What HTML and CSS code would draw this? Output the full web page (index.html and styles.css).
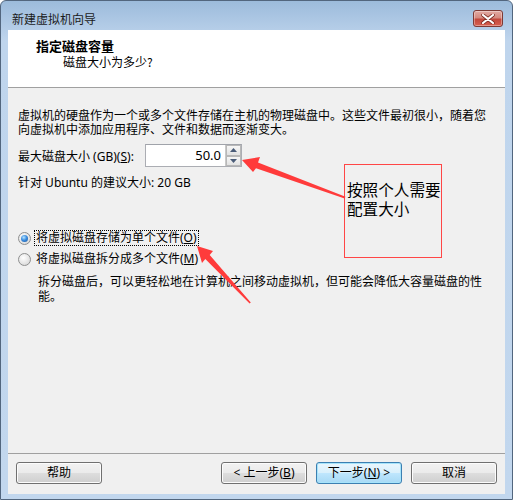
FILE: index.html
```html
<!DOCTYPE html>
<html lang="zh-CN">
<head>
<meta charset="utf-8">
<title>新建虚拟机向导</title>
<link rel="stylesheet" href="styles.css">
</head>
<body>
<div class="window">
  <div class="titlebar">
    <span class="title">新建虚拟机向导</span>
    <span class="close">
      <svg width="14" height="10" viewBox="0 0 14 10"><path d="M2 1 L12 9 M12 1 L2 9" stroke="#7a2a22" stroke-width="3.6" stroke-linecap="round"/><path d="M2 1 L12 9 M12 1 L2 9" stroke="#fff" stroke-width="2.2" stroke-linecap="round"/></svg>
    </span>
  </div>
  <div class="client">
    <div class="header">
      <div class="h-title">指定磁盘容量</div>
      <div class="h-sub">磁盘大小为多少?</div>
    </div>
    <div class="body">
      <p class="intro">虚拟机的硬盘作为一个或多个文件存储在主机的物理磁盘中。这些文件最初很小，随着您<br>向虚拟机中添加应用程序、文件和数据而逐渐变大。</p>
      <div class="size-row">
        <span class="size-label">最大磁盘大小 (GB)(<u>S</u>):</span>
        <div class="numbox">
          <span class="num">50.0</span>
          <span class="spin">
            <span class="spin-btn"><svg width="7" height="4" viewBox="0 0 7 4"><path d="M0 4 L3.5 0 L7 4Z" fill="#4a5c78"/></svg></span>
            <span class="spin-btn"><svg width="7" height="4" viewBox="0 0 7 4"><path d="M0 0 L3.5 4 L7 0Z" fill="#4a5c78"/></svg></span>
          </span>
        </div>
      </div>
      <p class="suggest">针对 Ubuntu 的建议大小: 20 GB</p>
      <div class="radio-row first">
        <span class="radio checked"></span>
        <span class="r-label focus">将虚拟磁盘存储为单个文件(<u>O</u>)</span>
      </div>
      <div class="radio-row second">
        <span class="radio"></span>
        <span class="r-label">将虚拟磁盘拆分成多个文件(<u>M</u>)</span>
      </div>
      <p class="desc">拆分磁盘后，可以更轻松地在计算机之间移动虚拟机，但可能会降低大容量磁盘的性<br>能。</p>
    </div>
    <div class="footer">
      <button class="btn">帮助</button>
      <span class="spacer"></span>
      <button class="btn">&lt; 上一步(<u>B</u>)</button>
      <button class="btn default">下一步(<u>N</u>) &gt;</button>
      <button class="btn">取消</button>
    </div>
  </div>
  <div class="note">按照个人需要<br>配置大小</div>
  <svg class="arrows" width="513" height="500" viewBox="0 0 513 500">
    <polygon points="242,160 260,157 258,162.6 345.5,196.8 344.6,198.4 256,168.2 253,172" fill="#ff3b3b"/>
    <polygon points="197,246 213,251 209.7,255 250.8,302.6 249.6,303.6 205.3,259 202,263" fill="#ff3b3b"/>
  </svg>
</div>
</body>
</html>
```
FILE: styles.css
```css
html, body {
  margin: 0;
  padding: 0;
  background: #ffffff;
}
body {
  font-family: "Noto Sans", "Noto Sans CJK SC", sans-serif;
  font-size: 12px;
  color: #000;
}
.window {
  position: relative;
  width: 513px;
  height: 500px;
  box-sizing: border-box;
  border: 1px solid #52667e;
  border-radius: 6px 6px 0 0;
  background: linear-gradient(#9cbbdb 0px, #b3cce7 26px, #bfd5ed 40px, #c2d7ee 100%);
  display: flex;
  flex-direction: column;
  padding: 0 7px 5px 7px;
}
.titlebar {
  height: 29px;
  flex: none;
  display: flex;
  align-items: flex-start;
  justify-content: space-between;
}
.title {
  margin-top: 11px;
  margin-left: 4px;
  line-height: 14px;
  font-family: "Noto Sans CJK SC", sans-serif;
  font-size: 12px;
  color: #1b1b1b;
}
.close {
  margin-top: 9px;
  margin-right: 2px;
  width: 30px;
  height: 17px;
  box-sizing: border-box;
  border: 1px solid #7d3a35;
  border-radius: 3px;
  background: linear-gradient(#e2aaa3 0%, #d58a80 45%, #c2483c 55%, #d8604f 100%);
  box-shadow: inset 0 0 0 1px rgba(255,255,255,0.35);
  display: flex;
  align-items: center;
  justify-content: center;
}
.client {
  flex: 1;
  display: flex;
  flex-direction: column;
  background: #f0f0f0;
}
.header {
  background: #ffffff;
  height: 49px;
  padding: 8px 0 0 28px;
  border-bottom: 1px solid #a0a0a0;
}
.h-title {
  font-family: "Noto Sans CJK SC", sans-serif;
  font-weight: bold;
  font-size: 13px;
  line-height: 16px;
}
.h-sub {
  font-family: "Noto Sans CJK SC", sans-serif;
  padding-left: 27px;
  line-height: 16px;
}
.body {
  flex: 1;
  padding: 21px 10px 0 10px;
}
.intro {
  margin: 0;
  line-height: 14px;
  white-space: nowrap;
}
.size-row {
  margin-top: 7px;
  display: flex;
  align-items: center;
  height: 23px;
}
.size-label {
  width: 127px;
  flex: none;
}
u {
  text-decoration: underline;
  text-underline-offset: 1px;
}
.numbox {
  width: 97px;
  height: 23px;
  box-sizing: border-box;
  border: 1px solid #abadb3;
  border-top-color: #a0a3aa;
  background: #fff;
  display: flex;
  align-items: stretch;
}
.num {
  flex: 1;
  text-align: right;
  padding-right: 4px;
  line-height: 21px;
  font-size: 13px;
}
.spin {
  width: 15px;
  display: flex;
  flex-direction: column;
  border-left: 1px solid #c9c9c9;
}
.spin-btn {
  flex: 1;
  display: flex;
  align-items: center;
  justify-content: center;
  border: 1px solid #b8b8b8;
  background: linear-gradient(#f6f6f6, #e2e2e2);
  box-sizing: border-box;
}
.suggest {
  margin: 9px 0 0 0;
  line-height: 14px;
}
.radio-row {
  display: flex;
  align-items: center;
  height: 16px;
}
.radio-row.first {
  margin-top: 40px;
}
.radio-row.second {
  margin-top: 5px;
}
.radio {
  width: 13px;
  height: 13px;
  box-sizing: border-box;
  border-radius: 50%;
  border: 1px solid #8e8f8f;
  background: radial-gradient(circle at 40% 35%, #ffffff 0%, #e8e8e8 50%, #cfcfcf 100%);
  display: flex;
  align-items: center;
  justify-content: center;
  margin-right: 3px;
  flex: none;
}
.radio.checked::after {
  content: "";
  width: 7px;
  height: 7px;
  border-radius: 50%;
  background: radial-gradient(circle at 40% 35%, #b8e6ff 0%, #3d8ee0 45%, #16519a 100%);
}
.r-label {
  line-height: 14px;
  padding: 0 1px;
  border: 1px solid transparent;
}
.r-label.focus {
  border: 1px dotted #000;
}
.desc {
  margin: 7px 0 0 20px;
  line-height: 15px;
  white-space: nowrap;
}
.footer {
  flex: none;
  border-top: 1px solid #a0a0a0;
  display: flex;
  gap: 9px;
  padding: 8px 8px 10px 8px;
}
.spacer {
  flex: 1;
}
.btn {
  width: 86px;
  height: 22px;
  box-sizing: border-box;
  border: 1px solid #707070;
  border-radius: 3px;
  background: linear-gradient(#f2f2f2 0%, #ebebeb 48%, #dddddd 52%, #cfcfcf 100%);
  box-shadow: inset 0 0 0 1px #fcfcfc;
  font-family: "Noto Sans", "Noto Sans CJK SC", sans-serif;
  font-size: 12px;
  color: #000;
  padding: 0;
  line-height: 18px;
}
.btn.default {
  border-color: #3c7fb1;
  background: linear-gradient(#eaf6fd 0%, #d9f0fc 48%, #bee6fd 52%, #a7d9f5 100%);
  box-shadow: inset 0 0 0 1px #a6e4fb;
}
.note {
  position: absolute;
  left: 343px;
  top: 163px;
  width: 96px;
  height: 92px;
  border: 1px solid #ff4646;
  padding: 15px 0 0 2px;
  box-sizing: content-box;
  font-family: "Noto Sans CJK SC", sans-serif;
  font-size: 15.6px;
  line-height: 19px;
  white-space: nowrap;
  color: #000;
}
.note {
  width: 96px;
  height: 77px;
  padding-left: 2px;
  width: 94px;
}
.arrows {
  position: absolute;
  left: -1px;
  top: -1px;
  pointer-events: none;
}
```
